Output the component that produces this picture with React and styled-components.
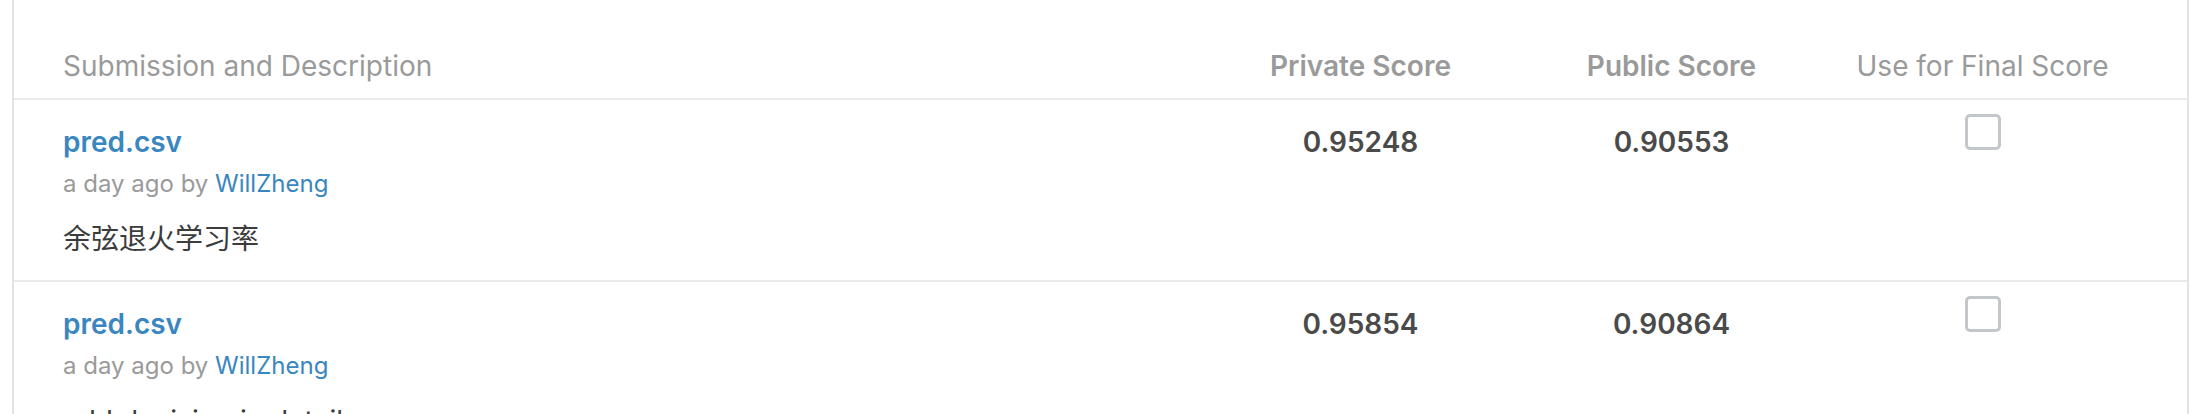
import React from 'react';
import styled, { createGlobalStyle } from 'styled-components';

const GlobalStyle = createGlobalStyle`
  html, body {
    margin: 0;
    padding: 0;
    background: #ffffff;
  }
  body {
    font-family: Inter, "Noto Sans CJK SC", "Liberation Sans", sans-serif;
    -webkit-font-smoothing: antialiased;
  }
`;

const Page = styled.div`
  padding: 0 11px 0 12px;
  height: 414px;
  overflow: hidden;
`;

const Card = styled.div`
  border-left: 2px solid #e3e3e3;
  border-right: 2px solid #e3e3e3;
  background: #fff;
`;

const Row = styled.div`
  display: grid;
  grid-template-columns: 1fr 311px 311px 311px;
  align-items: start;
  padding: 0 49px;
  border-bottom: 2px solid #ebebeb;
`;

const HeaderRow = styled(Row)`
  padding-top: 46px;
  padding-bottom: 12px;
`;

const BodyRow = styled(Row)`
  padding-top: 14px;
  padding-bottom: 21px;
`;

const HeadCell = styled.div`
  font-size: 28px;
  line-height: 40px;
  color: #9a9a9a;
  font-weight: ${({ $strong }) => ($strong ? 600 : 400)};
  text-align: ${({ $center }) => ($center ? 'center' : 'left')};
  white-space: nowrap;
`;

const Description = styled.div`
  padding-top: 8px;
  display: flex;
  flex-direction: column;
`;

const FileLink = styled.a`
  font-size: 28px;
  line-height: 40px;
  font-weight: 600;
  color: #3a86c0;
  text-decoration: none;
`;

const Meta = styled.div`
  margin-top: 6px;
  font-size: 24px;
  line-height: 32px;
  color: #9a9a9a;

  a {
    color: #3a86c0;
    text-decoration: none;
  }
`;

const Note = styled.div`
  margin-top: 19px;
  font-size: 28px;
  line-height: 40px;
  color: #3c3c3c;
`;

const Score = styled.div`
  padding-top: 8px;
  font-size: 28px;
  line-height: 40px;
  font-weight: 600;
  color: #4a4a4a;
  text-align: center;
`;

const CheckCell = styled.div`
  display: flex;
  justify-content: center;
`;

const Checkbox = styled.span`
  width: 36px;
  height: 36px;
  box-sizing: border-box;
  border: 3px solid #c3c6ca;
  border-radius: 5px;
  background: #fff;
`;

const submissions = [
  {
    file: 'pred.csv',
    when: 'a day ago',
    user: 'WillZheng',
    note: '余弦退火学习率',
    privateScore: '0.95248',
    publicScore: '0.90553',
  },
  {
    file: 'pred.csv',
    when: 'a day ago',
    user: 'WillZheng',
    note: 'add decision in detail',
    privateScore: '0.95854',
    publicScore: '0.90864',
  },
];

const App = () => (
  <Page>
    <GlobalStyle />
    <Card>
      <HeaderRow>
        <HeadCell>Submission and Description</HeadCell>
        <HeadCell $center $strong>Private Score</HeadCell>
        <HeadCell $center $strong>Public Score</HeadCell>
        <HeadCell $center>Use for Final Score</HeadCell>
      </HeaderRow>

      {submissions.map((s, i) => (
        <BodyRow key={i}>
          <Description>
            <FileLink href="#">{s.file}</FileLink>
            <Meta>
              {s.when} by <a href="#">{s.user}</a>
            </Meta>
            <Note>{s.note}</Note>
          </Description>
          <Score>{s.privateScore}</Score>
          <Score>{s.publicScore}</Score>
          <CheckCell>
            <Checkbox />
          </CheckCell>
        </BodyRow>
      ))}
    </Card>
  </Page>
);

export default App;
